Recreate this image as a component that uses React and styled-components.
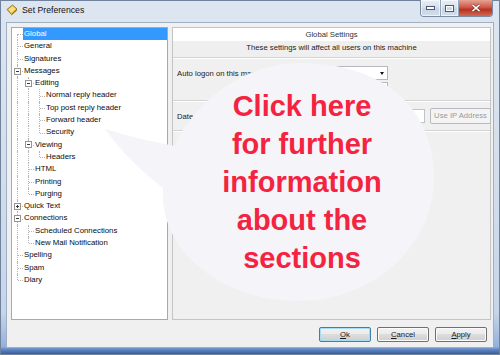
import React from 'react';
import styled, { createGlobalStyle, css } from 'styled-components';

const GlobalStyle = createGlobalStyle`
  html, body { margin: 0; padding: 0; }
  body {
    width: 500px; height: 355px; overflow: hidden;
    font-family: "Liberation Sans", Arial, sans-serif;
  }
`;

const Window = styled.div`
  position: relative;
  width: 500px;
  height: 355px;
  box-sizing: border-box;
  display: flex;
  flex-direction: column;
  overflow: hidden;
  background: linear-gradient(to bottom, #dde6f0 0%, #d4dfeb 45%, #c6d5e8 88%, #93b2dc 97.6%, #5a82c0 98.6%, #2f5797 100%);
  box-shadow: inset 0 0 0 1px #71839c;
`;

const TitleBar = styled.div`
  height: 22px;
  flex: none;
  display: flex;
  align-items: flex-start;
  padding-left: 6px;
`;

const AppIcon = styled.svg`
  width: 12px;
  height: 12px;
  margin-top: 4px;
  flex: none;
`;

const TitleText = styled.div`
  margin-left: 4px;
  margin-top: 5px;
  font-size: 8.7px;
  line-height: 11px;
  color: #111;
`;

const Controls = styled.div`
  margin-left: auto;
  margin-right: 7px;
  display: flex;
  height: 16px;
  border: 1px solid #7a8ba2;
  border-top: none;
  border-radius: 0 0 4px 4px;
  overflow: hidden;
`;

const CtrlButton = styled.div`
  width: ${p => p.$w}px;
  height: 100%;
  display: flex;
  align-items: center;
  justify-content: center;
  box-sizing: border-box;
  ${p => p.$close
    ? css`background: linear-gradient(to bottom, #e6a294 0%, #d0594a 45%, #b9321f 60%, #d06a55 100%);`
    : css`
        background: linear-gradient(to bottom, #e9eff6 0%, #d6e0ec 45%, #c7d4e5 55%, #d4dfec 100%);
        border-right: 1px solid #95a5ba;
        box-shadow: inset 0 0 0 1px rgba(255,255,255,0.6);
      `}
`;

const Client = styled.div`
  flex: 1;
  margin: 0 6px 7px 6px;
  background: #f0f0f0;
  border: 1px solid #9fb0c5;
  display: flex;
  flex-direction: column;
  padding: 4px 3px 0 4px;
  min-height: 0;
`;

const Body = styled.div`
  display: flex;
  gap: 4px;
  height: 293px;
  flex: none;
`;

const Tree = styled.div`
  width: 157px;
  flex: none;
  box-sizing: border-box;
  background: #fff;
  border: 1px solid #a5a9b0;
  font-size: 7.8px;
  color: #0c0c0c;
`;

const Row = styled.div`
  display: flex;
  height: 12.3px;
  align-items: stretch;
`;

const dotted = '1px dotted #b4b4b4';

const Guide = styled.span`
  position: relative;
  flex: none;
  width: 11px;
  ${p => p.$line && css`
    &::before {
      content: '';
      position: absolute;
      left: 5px; top: 0; bottom: 0;
      border-left: ${dotted};
    }
  `}
`;

const Connector = styled.span`
  position: relative;
  flex: none;
  width: 11px;
  &::before {
    content: '';
    position: absolute;
    left: 5px;
    top: ${p => (p.$first ? '50%' : '0')};
    bottom: ${p => (p.$last ? '50%' : '0')};
    border-left: ${dotted};
  }
  &::after {
    content: '';
    position: absolute;
    left: 6px; right: 0; top: 50%;
    border-top: ${dotted};
  }
`;

const Expander = styled.span`
  position: absolute;
  z-index: 1;
  left: 2px;
  top: calc(50% - 3.5px);
  width: 7px;
  height: 7px;
  box-sizing: border-box;
  border: 1px solid #959595;
  background: #fff;
  &::before {
    content: '';
    position: absolute;
    left: 1px; right: 1px; top: 2px;
    border-top: 1px solid #3a3a3a;
  }
  ${p => p.$plus && css`
    &::after {
      content: '';
      position: absolute;
      top: 1px; bottom: 1px; left: 2px;
      border-left: 1px solid #3a3a3a;
    }
  `}
`;

const Label = styled.span`
  padding: 0 2px 0 1px;
  line-height: 12.3px;
  white-space: nowrap;
  ${p => p.$selected && css`
    flex: 1;
    background: #3399ff;
    color: #fff;
  `}
`;

const Panel = styled.div`
  width: 319px;
  flex: none;
  box-sizing: border-box;
  border: 1px solid #c4c4c4;
  background: #f0f0f0;
  display: flex;
  flex-direction: column;
  font-size: 7.7px;
  color: #1a1a1a;
`;

const PanelTitle = styled.div`
  height: 13px;
  line-height: 14px;
  text-align: center;
  background: #fff;
  color: #333;
`;

const PanelSub = styled.div`
  height: 16px;
  line-height: 13px;
  text-align: center;
  background: #efefef;
  border-bottom: 1px solid #d3d3d3;
  box-shadow: 0 1px 0 #fff;
`;

const Section = styled.div`
  height: ${p => p.$h}px;
  flex: none;
  box-sizing: border-box;
  padding: ${p => p.$pt}px 4px 0 4px;
  border-bottom: 1px solid #d3d3d3;
  box-shadow: 0 1px 0 #fff;
  display: grid;
  grid-template-columns: 95px auto auto;
  grid-auto-rows: min-content;
  align-items: center;
  justify-content: start;
  row-gap: 2px;
  column-gap: 5px;
`;

const FieldLabel = styled.span`
  white-space: nowrap;
  grid-column: 1;
`;

const Select = styled.div`
  grid-column: 2;
  width: 111px;
  height: ${p => p.$h}px;
  box-sizing: border-box;
  background: #fff;
  border: 1px solid #b5b8bd;
  position: relative;
  ${p => p.$arrow && css`
    &::after {
      content: '';
      position: absolute;
      right: 3px;
      top: calc(50% - 1.5px);
      border-left: 2.5px solid transparent;
      border-right: 2.5px solid transparent;
      border-top: 3px solid #111;
    }
  `}
`;

const Input = styled.div`
  grid-column: 2;
  width: 148px;
  height: 14px;
  box-sizing: border-box;
  background: #fff;
  border: 1px solid #c0c3c8;
`;

const SmallButton = styled.div`
  grid-column: 3;
  width: 61px;
  height: 16px;
  box-sizing: border-box;
  border: 1px solid #b7babf;
  border-radius: 2px;
  background: #f4f4f4;
  color: #9a9a9a;
  text-align: center;
  line-height: 14px;
`;

const ButtonRow = styled.div`
  display: flex;
  justify-content: flex-end;
  gap: 6px;
  margin-top: 7px;
  padding-right: 3px;
`;

const DlgButton = styled.div`
  width: 52px;
  height: 15px;
  box-sizing: border-box;
  border: 1px solid ${p => (p.$default ? '#3c7fb1' : '#707070')};
  border-radius: 2px;
  background: linear-gradient(to bottom, #f2f2f2 0%, #ebebeb 49%, #dddddd 50%, #cfcfcf 100%);
  box-shadow: ${p => (p.$default ? 'inset 0 0 0 1px #a8dcf5' : 'inset 0 0 0 1px #fbfbfb')};
  font-size: 7.7px;
  line-height: 13px;
  text-align: center;
  color: #1b1b1b;
  u { text-decoration-thickness: 1px; text-underline-offset: 1px; }
`;

const Overlay = styled.div`
  position: absolute;
  inset: 0;
  pointer-events: none;
`;

const BubbleShape = styled.svg`
  position: absolute;
  left: 0;
  top: 0;
  width: 500px;
  height: 355px;
`;

const BubbleText = styled.div`
  position: absolute;
  left: 172px;
  top: 87px;
  width: 260px;
  text-align: center;
  font-family: "Liberation Sans", Arial, sans-serif;
  font-weight: 700;
  font-size: 29px;
  line-height: 38px;
  color: #f4233f;
`;

const treeData = [
  { label: 'Global', selected: true },
  { label: 'General' },
  { label: 'Signatures' },
  {
    label: 'Messages', open: true, children: [
      {
        label: 'Editing', open: true, children: [
          { label: 'Normal reply header' },
          { label: 'Top post reply header' },
          { label: 'Forward header' },
          { label: 'Security' },
        ],
      },
      { label: 'Viewing', open: true, children: [{ label: 'Headers' }] },
      { label: 'HTML' },
      { label: 'Printing' },
      { label: 'Purging' },
    ],
  },
  { label: 'Quick Text', open: false, children: [{ label: 'Templates' }] },
  {
    label: 'Connections', open: true, children: [
      { label: 'Scheduled Connections' },
      { label: 'New Mail Notification' },
    ],
  },
  { label: 'Spelling' },
  { label: 'Spam' },
  { label: 'Diary' },
];

function flatten(nodes, guides = [], out = []) {
  nodes.forEach((n, i) => {
    const last = i === nodes.length - 1;
    out.push({
      label: n.label,
      selected: n.selected,
      guides,
      last,
      first: i === 0 && guides.length === 0,
      expander: n.children ? (n.open ? 'minus' : 'plus') : null,
    });
    if (n.children && n.open) flatten(n.children, [...guides, !last], out);
  });
  return out;
}

const rows = flatten(treeData);

const bubblePath =
  'M 163 195 C 163 130 225 63 300 63 ' +
  'C 380 63 434 105 434 178 ' +
  'C 434 246 373 301 298 301 ' +
  'C 225 301 163 255 163 195 Z';

const tailPath = 'M 176 146 Q 140 140 105 129 Q 132 166 170 193 Z';

export default function App() {
  return (
    <>
      <GlobalStyle />
      <Window>
        <TitleBar>
          <AppIcon viewBox="0 0 12 12">
            <path d="M1 5.5 L6.5 1 L11 5 L5.5 10.5 Z" fill="#e8b93a" stroke="#8a6a1c" strokeWidth="0.8" />
            <path d="M2.5 5.5 L6.5 2.3 L9.5 5 L5.5 8.8 Z" fill="#f7e08a" />
            <path d="M5.5 10.5 L11 5 L11 6.5 L5.5 11.5 Z" fill="#9c7a22" />
          </AppIcon>
          <TitleText>Set Preferences</TitleText>
          <Controls>
            <CtrlButton $w={20}>
              <svg width="9" height="4" viewBox="0 0 9 4">
                <rect x="0.5" y="0.5" width="8" height="3" fill="#fff" stroke="#4a5a70" strokeWidth="1" />
              </svg>
            </CtrlButton>
            <CtrlButton $w={18}>
              <svg width="9" height="7" viewBox="0 0 9 7">
                <rect x="0.5" y="0.5" width="8" height="6" fill="none" stroke="#4a5a70" strokeWidth="1" />
                <rect x="1.5" y="1.5" width="6" height="4" fill="none" stroke="#fff" strokeWidth="1" />
              </svg>
            </CtrlButton>
            <CtrlButton $w={33} $close>
              <svg width="10" height="8" viewBox="0 0 10 8">
                <path d="M1.5 0.8 L8.5 7.2 M8.5 0.8 L1.5 7.2" stroke="#5a1a10" strokeWidth="2.6" />
                <path d="M1.5 0.8 L8.5 7.2 M8.5 0.8 L1.5 7.2" stroke="#fff" strokeWidth="1.6" />
              </svg>
            </CtrlButton>
          </Controls>
        </TitleBar>

        <Client>
          <Body>
            <Tree>
              {rows.map((r, i) => (
                <Row key={i}>
                  {r.guides.map((g, j) => (
                    <Guide key={j} $line={g} />
                  ))}
                  <Connector $first={r.first} $last={r.last}>
                    {r.expander && <Expander $plus={r.expander === 'plus'} />}
                  </Connector>
                  <Label $selected={r.selected}>{r.label}</Label>
                </Row>
              ))}
            </Tree>

            <Panel>
              <PanelTitle>Global Settings</PanelTitle>
              <PanelSub>These settings will affect all users on this machine</PanelSub>
              <Section $h={43} $pt={8}>
                <FieldLabel>Auto logon on this machine as:</FieldLabel>
                <Select $h={14} $arrow />
                <Select $h={11} />
              </Section>
              <Section $h={30} $pt={7}>
                <FieldLabel>Date format:</FieldLabel>
                <Input />
                <SmallButton>Use IP Address</SmallButton>
              </Section>
            </Panel>
          </Body>

          <ButtonRow>
            <DlgButton $default><u>O</u>k</DlgButton>
            <DlgButton><u>C</u>ancel</DlgButton>
            <DlgButton><u>A</u>pply</DlgButton>
          </ButtonRow>
        </Client>

        <Overlay>
          <BubbleShape viewBox="0 0 500 355">
            <path d={bubblePath} fill="#f4f4f9" />
            <path d={tailPath} fill="#f4f4f9" />
          </BubbleShape>
          <BubbleText>
            Click here<br />
            for further<br />
            information<br />
            about the<br />
            sections
          </BubbleText>
        </Overlay>
      </Window>
    </>
  );
}
